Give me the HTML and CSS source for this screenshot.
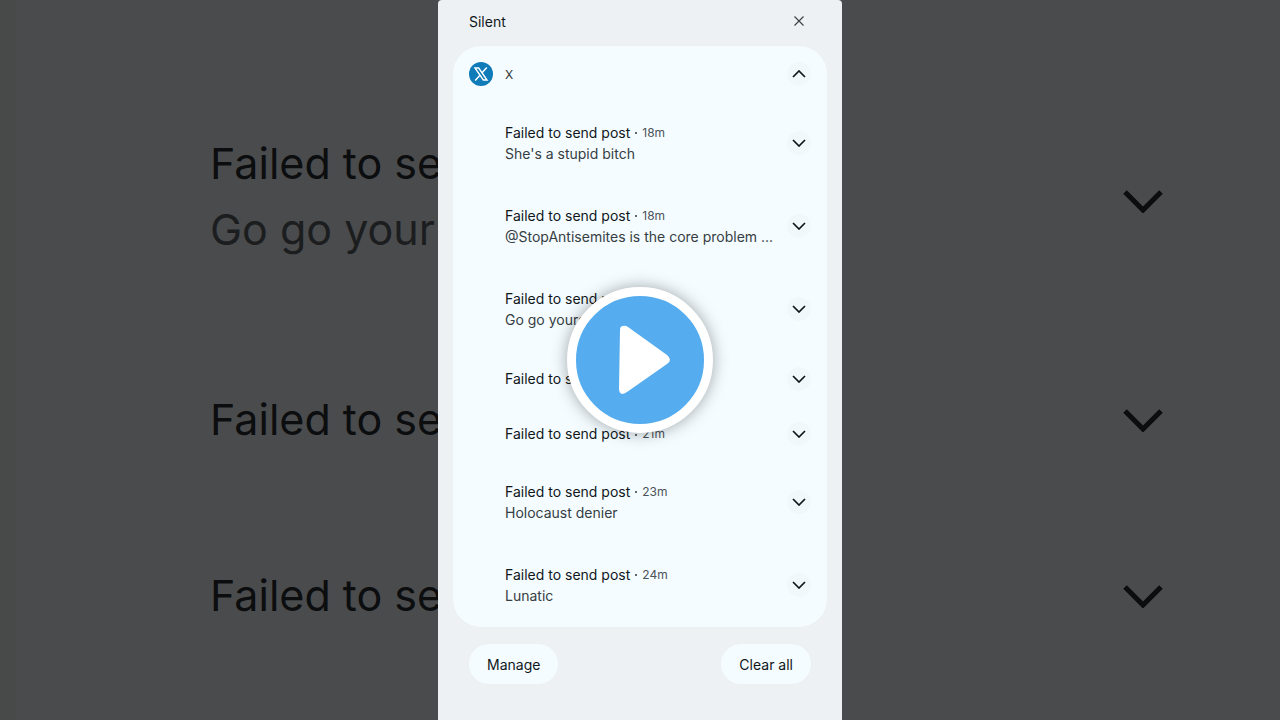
FILE: index.html
```html
<!DOCTYPE html>
<html lang="en">
<head>
    <meta charset="UTF-8">
    <meta name="viewport" content="width=device-width, initial-scale=1.0">
    <title>Notifications</title>
    <link rel="stylesheet" href="styles.css">
</head>
<body>
    <!-- Shared icons -->
    <svg class="sprite" aria-hidden="true">
        <symbol id="chevron" viewBox="0 0 14 8">
            <path d="M1 1l6 6 6-6" fill="none" stroke="currentColor" stroke-width="1.7"/>
        </symbol>
    </svg>

    <div class="stage">
        <div class="backdrop backdrop-left" aria-hidden="true">
            <div class="big-row double">
                <p>Failed to se</p>
                <p class="muted">Go go your</p>
            </div>
            <div class="big-row"><p>Failed to se</p></div>
            <div class="big-row"><p>Failed to se</p></div>
        </div>

        <main class="panel">
            <header class="panel-header">
                <h1>Silent</h1>
                <button class="close" aria-label="Close">
                    <svg width="10" height="10" viewBox="0 0 10 10"><path d="M.5.5l9 9M9.500.5l-9 9" stroke="currentColor" stroke-width="1.2"/></svg>
                </button>
            </header>

            <section class="card">
                <div class="app">
                    <svg class="logo" viewBox="0 0 24 24" aria-hidden="true">
                        <circle cx="12" cy="12" r="12" fill="#0f7bb8"/>
                        <path d="M17.800 5.500l-5.200 5.800M11.200 12.900l-5 5.600" stroke="#fff" stroke-width="1.500"/>
                        <path d="M6 6h3.700l8.300 12h-3.700z" fill="#0f7bb8" stroke="#fff" stroke-width="1.400"/>
                    </svg>
                    <h2>X</h2>
                    <button class="toggle open" aria-label="Collapse"><svg><use href="#chevron"/></svg></button>
                </div>
                <ul>
                    <li>
                        <div class="text">
                            <h3>Failed to send post <span class="dot"></span> <time>18m</time></h3>
                            <p>She's a stupid bitch</p>
                        </div>
                        <button class="toggle" aria-label="Expand"><svg><use href="#chevron"/></svg></button>
                    </li>
                    <li>
                        <div class="text">
                            <h3>Failed to send post <span class="dot"></span> <time>18m</time></h3>
                            <p>@StopAntisemites is the core problem ...</p>
                        </div>
                        <button class="toggle" aria-label="Expand"><svg><use href="#chevron"/></svg></button>
                    </li>
                    <li>
                        <div class="text">
                            <h3>Failed to send p</h3>
                            <p>Go go yours</p>
                        </div>
                        <button class="toggle" aria-label="Expand"><svg><use href="#chevron"/></svg></button>
                    </li>
                    <li class="single">
                        <div class="text">
                            <h3>Failed to s</h3>
                        </div>
                        <button class="toggle" aria-label="Expand"><svg><use href="#chevron"/></svg></button>
                    </li>
                    <li class="single">
                        <div class="text">
                            <h3>Failed to send post <span class="dot"></span> <time>21m</time></h3>
                        </div>
                        <button class="toggle" aria-label="Expand"><svg><use href="#chevron"/></svg></button>
                    </li>
                    <li>
                        <div class="text">
                            <h3>Failed to send post <span class="dot"></span> <time>23m</time></h3>
                            <p>Holocaust denier</p>
                        </div>
                        <button class="toggle" aria-label="Expand"><svg><use href="#chevron"/></svg></button>
                    </li>
                    <li>
                        <div class="text">
                            <h3>Failed to send post <span class="dot"></span> <time>24m</time></h3>
                            <p>Lunatic</p>
                        </div>
                        <button class="toggle" aria-label="Expand"><svg><use href="#chevron"/></svg></button>
                    </li>
                </ul>
            </section>

            <footer>
                <button class="pill">Manage</button>
                <button class="pill">Clear all</button>
            </footer>
        </main>

        <div class="backdrop backdrop-right" aria-hidden="true">
            <div class="big-row double"><svg><use href="#chevron"/></svg></div>
            <div class="big-row"><svg><use href="#chevron"/></svg></div>
            <div class="big-row"><svg><use href="#chevron"/></svg></div>
        </div>

        <button class="play" aria-label="Play video">
            <svg viewBox="0 0 52 70"><path d="M1 5Q1 1 4 1Q6 0 9 2L48 30Q54 35 48 39L8 67Q5 69 3 69Q0 68 0 64Z" fill="#fff"/></svg>
        </button>
    </div>
</body>
</html>
```
FILE: styles.css
```css
* {
    box-sizing: border-box;
}
body {
    margin: 0;
    font-family: Inter, "Liberation Sans", sans-serif;
    font-size: 14px;
    line-height: 21px;
    color: #10171b;
    background-color: #4a4b4d;
}
h1, h2, h3, p, ul {
    margin: 0;
    padding: 0;
    font-size: inherit;
    font-weight: 400;
}
button {
    border: none;
    padding: 0;
    font: inherit;
    color: inherit;
    cursor: pointer;
}
.sprite {
    position: absolute;
    width: 0;
    height: 0;
}
.stage {
    position: relative;
    display: grid;
    grid-template-columns: minmax(0, 1fr) minmax(0, 404px) minmax(0, 1fr);
    min-height: 100vh;
}

/* Enlarged notifications behind the panel */
.backdrop {
    overflow: hidden;
    padding-top: 70px;
    font-size: 43px;
    line-height: 66px;
    white-space: nowrap;
    color: #0b0d0f;
}
.backdrop-left {
    padding-left: 194px;
    border-left: 16px solid #474a49;
}
.backdrop-right {
    padding-left: 280px;
}
.big-row {
    display: flex;
    flex-direction: column;
    justify-content: center;
    height: 176px;
}
.big-row.double {
    height: 262px;
}
.backdrop-left .big-row {
    padding-bottom: 2px;
}
.backdrop-left .double {
    padding-bottom: 10px;
}
.big-row .muted {
    color: #1b1d1f;
}
.big-row svg {
    width: 42px;
    height: 24px;
}

.panel {
    padding: 0 15px;
    background-color: #eef1f4;
    border-radius: 4px 4px 0 0;
}
.panel-header {
    display: flex;
    justify-content: space-between;
    align-items: center;
    height: 46px;
    padding: 0 16px 4px;
}
.close {
    display: flex;
    align-items: center;
    justify-content: center;
    width: 24px;
    height: 24px;
    background: none;
    color: #3d4347;
}
.card {
    background-color: #f4fcff;
    border-radius: 28px;
}
.app {
    display: flex;
    align-items: center;
    gap: 12px;
    height: 56px;
    padding: 0 16px;
}
.logo {
    width: 24px;
    height: 24px;
}
.app h2 {
    flex: 1;
    font-size: 12px;
    color: #30373b;
}
.card ul {
    list-style: none;
}
.card li {
    display: flex;
    align-items: center;
    gap: 8px;
    height: 83px;
    padding: 0 16px 2px 52px;
}
.card li.single {
    height: 55px;
    padding-bottom: 0;
}
.text {
    flex: 1;
    min-width: 0;
    white-space: nowrap;
}
.text h3 {
    display: flex;
    align-items: center;
    gap: 5px;
}
.text p {
    color: #363e43;
}
.dot {
    width: 2px;
    height: 2px;
    margin-top: 2px;
    border-radius: 50%;
    background-color: #30373b;
}
.text time {
    font-size: 12px;
    color: #4b5358;
}
.toggle {
    display: flex;
    align-items: center;
    justify-content: center;
    width: 24px;
    height: 24px;
    border-radius: 50%;
    background-color: #f1f8fb;
}
.toggle svg {
    width: 14px;
    height: 8px;
}
.toggle.open svg {
    transform: rotate(180deg);
}
footer {
    display: flex;
    justify-content: space-between;
    padding: 17px 16px;
}
.pill {
    height: 40px;
    padding: 0 18px;
    border-radius: 20px;
    background-color: #f4fcff;
}

/* Play button over the video */
.play {
    position: absolute;
    top: 50%;
    left: 50%;
    display: flex;
    align-items: center;
    justify-content: center;
    width: 146px;
    height: 146px;
    transform: translate(-50%, -50%);
    border: 9px solid #fff;
    border-radius: 50%;
    background-color: #55acee;
    box-shadow: 0 0 16px rgba(0, 0, 0, 0.35);
}
.play svg {
    width: 52px;
    height: 70px;
    margin-left: 10px;
}
```
